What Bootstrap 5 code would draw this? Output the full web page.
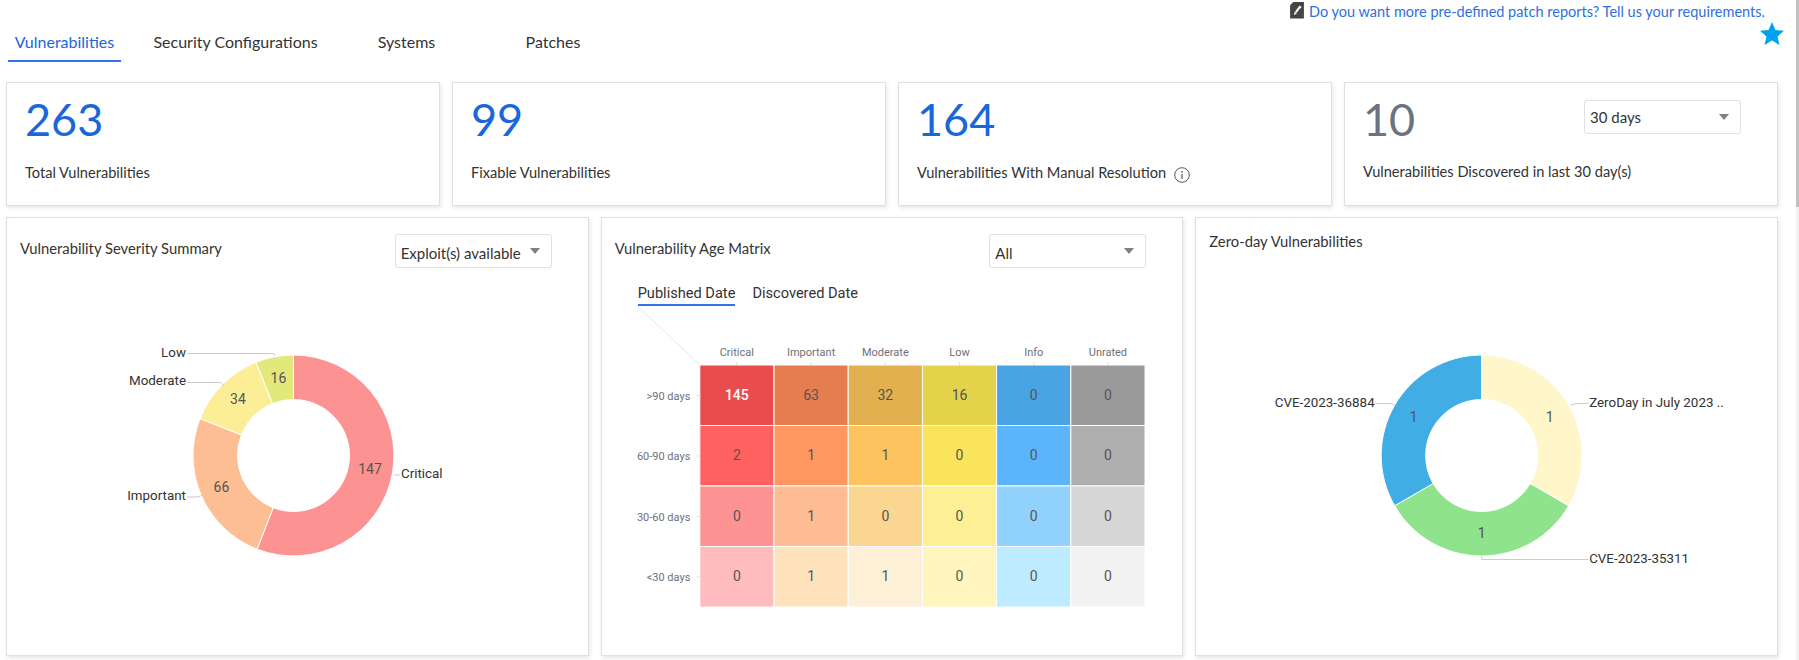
<!DOCTYPE html>
<html lang="en">
<head>
<meta charset="utf-8">
<title>Vulnerabilities</title>
<link href="https://cdn.jsdelivr.net/npm/bootstrap@5.3.0/dist/css/bootstrap.min.css" rel="stylesheet">
<style>
html,body{height:100%;overflow:hidden}
body{background:#fff;color:#333;font-family:Lato,"Liberation Sans",sans-serif;font-size:15px}
.shell{padding:0 21px 0 6px}
.top-head{height:82px}
.tab-strip{margin:26px 0 0 2px;flex-wrap:nowrap}
.tab-strip .nav-link{height:36px;padding:5px 0 7px;line-height:22px;font-size:16px;color:#333;text-align:center;border-bottom:2px solid transparent}
.tab-strip .nav-link.active{color:#1a66db;border-bottom-color:#2f74e8}
.w-a{width:113px}.w-b{width:229px}.w-c{width:113px}.w-d{width:180px}
.req-link{color:#2f6fdc;text-decoration:none;line-height:26px;margin:-1px 13px 0 0;font-size:14.5px}
.req-icon{margin-right:5px;vertical-align:-2px}
.star-mark{margin:-3px -6px 0 0;display:block}
.gut{--bs-gutter-x:12px;--bs-gutter-y:0}
.panel{border:1px solid #dfe0e6;border-radius:0;box-shadow:1px 2px 4px rgba(0,0,0,.1);background:#fff}
.stat-panel{height:124px;padding:10px 0 0 18px;margin-bottom:11px}
.stat-top{height:54px}
.stat-num{font-size:45px;line-height:50px;font-weight:400;color:#1a66db;margin-top:1px}
.stat-num.muted-num{color:#6c7380}
.stat-label{margin-top:15px;line-height:20px;font-size:14.6px;color:#333;display:flex;align-items:center}
.info-glyph{margin-left:8px;margin-top:3px}
.pick{height:34px;width:157px;padding:0 18px 0 5px;border:1px solid #dfe0e6;border-radius:3px;font-size:15px;line-height:32px;color:#333;font-family:Lato,"Liberation Sans",sans-serif;background-position:right 11px center;background-size:10px 6px;background-image:url("data:image/svg+xml,%3Csvg xmlns='http://www.w3.org/2000/svg' viewBox='0 0 10 6'%3E%3Cpath d='M0 0h10L5 6z' fill='%23808080'/%3E%3C/svg%3E")}
.stat-pick{margin:7px 36px 0 0}
.chart-panel{height:439px}
.chart-head{height:62px;padding:16px 36px 0 13px}
.chart-head .pick{padding-top:2px}
.chart-title{font-size:14.8px;line-height:22px;margin-top:3px;color:#333}
.chart-title.raised{margin-top:-4px}
.sub-tabs{height:26px;margin-left:36px;gap:17px;font-family:Roboto,"Liberation Sans",sans-serif;font-size:14.6px}
.sub-tabs .nav-link{padding:2px 0 0;line-height:22px;height:26px;color:#333;border-bottom:2px solid transparent}
.sub-tabs .nav-link.active{border-bottom-color:#2f74e8}
.chart-svg{display:block;width:100%}
.h374{height:374px}.h348{height:348px}
.chart-svg text{font-family:Roboto,"Liberation Sans",sans-serif}
.lbl{font-size:13.4px;fill:#333}
.val{font-size:14px;fill:#555;text-anchor:middle}
.val.strong{fill:#fff;font-weight:500}
.ax{font-size:11px;fill:#6e7079}
.leader{fill:none;stroke:#ccc;stroke-width:1}
.cells rect{stroke:#fff;stroke-width:1}
.sb-track{position:fixed;top:0;right:0;bottom:0;width:3px;background:#f1f1f1}
.sb-thumb{height:207px;background:#c1c1c1}
</style>
</head>
<body>
<div class="shell">
  <header class="top-head d-flex justify-content-between">
    <ul class="nav tab-strip">
      <li class="nav-item w-a"><a class="nav-link active" href="#">Vulnerabilities</a></li>
      <li class="nav-item w-b"><a class="nav-link" href="#">Security Configurations</a></li>
      <li class="nav-item w-c"><a class="nav-link" href="#">Systems</a></li>
      <li class="nav-item w-d"><a class="nav-link" href="#">Patches</a></li>
    </ul>
    <div class="d-flex flex-column align-items-end">
      <a class="req-link" href="#"><svg class="req-icon" width="14" height="17" viewBox="0 0 13 16"><path d="M3 0H13V15.500H0V3Z" fill="#444"/><path d="M3.500 12.500l.8-3.200L9 3.200l1.800 1.400L6.200 10.900z" fill="#fff"/><path d="M5 9.500l1.500 1L9.500 6" stroke="#444" stroke-width=".7" fill="none"/></svg>Do you want more pre-defined patch reports? Tell us your requirements.</a>
      <svg class="star-mark" width="24" height="23" viewBox="0 0 24 23"><path d="M12 0l3.400 8 8.600.8-6.500 5.700 2 8.500L12 18.500 4.500 23l2-8.500L0 8.800 8.600 8z" fill="#00a2ed"/></svg>
    </div>
  </header>

  <div class="row gut">
    <div class="col-3"><div class="panel stat-panel">
      <div class="stat-top"><div class="stat-num">263</div></div>
      <div class="stat-label">Total Vulnerabilities</div>
    </div></div>
    <div class="col-3"><div class="panel stat-panel">
      <div class="stat-top"><div class="stat-num">99</div></div>
      <div class="stat-label">Fixable Vulnerabilities</div>
    </div></div>
    <div class="col-3"><div class="panel stat-panel">
      <div class="stat-top"><div class="stat-num">164</div></div>
      <div class="stat-label">Vulnerabilities With Manual Resolution
        <svg class="info-glyph" width="16" height="16" viewBox="0 0 16 16"><circle cx="8" cy="8" r="7.300" fill="none" stroke="#555" stroke-width="1"/><circle cx="8" cy="4.800" r=".9" fill="#555"/><path d="M8 7v5" stroke="#555" stroke-width="1.200"/></svg>
      </div>
    </div></div>
    <div class="col-3"><div class="panel stat-panel">
      <div class="stat-top d-flex justify-content-between align-items-start">
        <div class="stat-num muted-num">10</div>
        <select class="form-select pick stat-pick" aria-label="Period"><option>30 days</option></select>
      </div>
      <div class="stat-label">Vulnerabilities Discovered in last 30 day(s)</div>
    </div></div>
  </div>

  <div class="row gut">
    <div class="col-4"><div class="panel chart-panel">
      <div class="chart-head d-flex justify-content-between align-items-start">
        <div class="chart-title">Vulnerability Severity Summary</div>
        <select class="form-select pick" aria-label="Filter"><option>Exploit(s) available</option></select>
      </div>
      <svg class="chart-svg h374" viewBox="7 280 580.67 374" preserveAspectRatio="none">
        <g stroke="#fff" stroke-width="1">
          <path fill="#fd9292" d="M293.500 355A100.500 100.500 0 1 1 257.130 549.190L273.230 507.700A56 56 0 1 0 293.500 399.500Z"/>
          <path fill="#fdbe94" d="M257.130 549.190A100.500 100.500 0 0 1 200.030 418.570L241.420 434.920A56 56 0 0 0 273.230 507.700Z"/>
          <path fill="#fcee96" d="M200.030 418.570A100.500 100.500 0 0 1 256.010 362.260L272.610 403.540A56 56 0 0 0 241.420 434.920Z"/>
          <path fill="#e3e87b" d="M256.010 362.260A100.500 100.500 0 0 1 293.500 355V399.500A56 56 0 0 0 272.610 403.540Z"/>
        </g>
        <path class="leader" d="M187 353.500H274L275 356M187 382.500H221L224 386M187 497H198L203 495M394 475H400"/>
        <text class="lbl" x="401" y="478.500">Critical</text>
        <text class="lbl" x="186" y="500.500" text-anchor="end">Important</text>
        <text class="lbl" x="186" y="385.500" text-anchor="end">Moderate</text>
        <text class="lbl" x="186" y="357.500" text-anchor="end">Low</text>
        <text class="val" x="370" y="474">147</text>
        <text class="val" x="221.500" y="492">66</text>
        <text class="val" x="238" y="404">34</text>
        <text class="val" x="278.500" y="383">16</text>
      </svg>
    </div></div>
    <div class="col-4"><div class="panel chart-panel">
      <div class="chart-head d-flex justify-content-between align-items-start">
        <div class="chart-title">Vulnerability Age Matrix</div>
        <select class="form-select pick" aria-label="Severity"><option>All</option></select>
      </div>
      <ul class="nav sub-tabs">
        <li class="nav-item"><a class="nav-link active" href="#">Published Date</a></li>
        <li class="nav-item"><a class="nav-link" href="#">Discovered Date</a></li>
      </ul>
      <svg class="chart-svg h348" viewBox="601.67 306 580.67 348" preserveAspectRatio="none">
        <path d="M638 307L699.500 365" stroke="#e6e6e6" fill="none"/>
        <g class="cells">
          <rect x="699.500" y="365" width="74.200" height="60.500" fill="#e84c4d"/><rect x="773.700" y="365" width="74.200" height="60.500" fill="#e67d4f"/><rect x="847.900" y="365" width="74.200" height="60.500" fill="#e3b04f"/><rect x="922.100" y="365" width="74.200" height="60.500" fill="#e3d24a"/><rect x="996.300" y="365" width="74.200" height="60.500" fill="#4aa3e3"/><rect x="1070.500" y="365" width="74.200" height="60.500" fill="#9a9a9a"/>
          <rect x="699.500" y="425.500" width="74.200" height="60.500" fill="#ff6060"/><rect x="773.700" y="425.500" width="74.200" height="60.500" fill="#ff9860"/><rect x="847.900" y="425.500" width="74.200" height="60.500" fill="#fcc35f"/><rect x="922.100" y="425.500" width="74.200" height="60.500" fill="#f9e45c"/><rect x="996.300" y="425.500" width="74.200" height="60.500" fill="#5cb5fa"/><rect x="1070.500" y="425.500" width="74.200" height="60.500" fill="#afafaf"/>
          <rect x="699.500" y="486" width="74.200" height="60.500" fill="#fd9393"/><rect x="773.700" y="486" width="74.200" height="60.500" fill="#fdbc94"/><rect x="847.900" y="486" width="74.200" height="60.500" fill="#fbd691"/><rect x="922.100" y="486" width="74.200" height="60.500" fill="#fcef94"/><rect x="996.300" y="486" width="74.200" height="60.500" fill="#91d1fd"/><rect x="1070.500" y="486" width="74.200" height="60.500" fill="#d6d6d6"/>
          <rect x="699.500" y="546.500" width="74.200" height="60.500" fill="#ffbcbe"/><rect x="773.700" y="546.500" width="74.200" height="60.500" fill="#fee2bc"/><rect x="847.900" y="546.500" width="74.200" height="60.500" fill="#fdf0d6"/><rect x="922.100" y="546.500" width="74.200" height="60.500" fill="#fff5bd"/><rect x="996.300" y="546.500" width="74.200" height="60.500" fill="#bdebff"/><rect x="1070.500" y="546.500" width="74.200" height="60.500" fill="#f2f2f2"/>
        </g>
        <path d="M736.500 362v3M810.800 362v3M885 362v3M959.200 362v3M1033.400 362v3M1107.600 362v3M696.500 395.500h3M696.500 456h3M696.500 516.500h3M696.500 577h3" stroke="#ddd" fill="none"/>
        <g text-anchor="middle">
          <text class="ax" x="736.500" y="356">Critical</text><text class="ax" x="810.800" y="356">Important</text><text class="ax" x="885" y="356">Moderate</text><text class="ax" x="959.200" y="356">Low</text><text class="ax" x="1033.400" y="356">Info</text><text class="ax" x="1107.600" y="356">Unrated</text>
        </g>
        <g text-anchor="end">
          <text class="ax" x="690" y="400">&gt;90 days</text><text class="ax" x="690" y="460">60-90 days</text><text class="ax" x="690" y="521">30-60 days</text><text class="ax" x="690" y="581">&lt;30 days</text>
        </g>
        <text class="val strong" x="736.500" y="400">145</text><text class="val" x="810.800" y="400">63</text><text class="val" x="885" y="400">32</text><text class="val" x="959.200" y="400">16</text><text class="val" x="1033.400" y="400">0</text><text class="val" x="1107.600" y="400">0</text>
        <text class="val" x="736.500" y="460">2</text><text class="val" x="810.800" y="460">1</text><text class="val" x="885" y="460">1</text><text class="val" x="959.200" y="460">0</text><text class="val" x="1033.400" y="460">0</text><text class="val" x="1107.600" y="460">0</text>
        <text class="val" x="736.500" y="521">0</text><text class="val" x="810.800" y="521">1</text><text class="val" x="885" y="521">0</text><text class="val" x="959.200" y="521">0</text><text class="val" x="1033.400" y="521">0</text><text class="val" x="1107.600" y="521">0</text>
        <text class="val" x="736.500" y="581">0</text><text class="val" x="810.800" y="581">1</text><text class="val" x="885" y="581">1</text><text class="val" x="959.200" y="581">0</text><text class="val" x="1033.400" y="581">0</text><text class="val" x="1107.600" y="581">0</text>
      </svg>
    </div></div>
    <div class="col-4"><div class="panel chart-panel">
      <div class="chart-head d-flex justify-content-between align-items-start">
        <div class="chart-title raised">Zero-day Vulnerabilities</div>
      </div>
      <svg class="chart-svg h374" viewBox="1196.330 280 580.67 374" preserveAspectRatio="none">
        <g stroke="#fff" stroke-width="1">
          <path fill="#fff6c9" d="M1482 355A100.500 100.500 0 0 1 1569.030 505.750L1530.500 483.500A56 56 0 0 0 1482 399.500Z"/>
          <path fill="#90e38d" d="M1569.030 505.750A100.500 100.500 0 0 1 1394.970 505.750L1433.500 483.500A56 56 0 0 0 1530.500 483.500Z"/>
          <path fill="#40aee5" d="M1394.970 505.750A100.500 100.500 0 0 1 1482 355V399.500A56 56 0 0 0 1433.500 483.500Z"/>
        </g>
        <path class="leader" d="M1571 405L1577 403.500H1589M1376 403.500H1392L1395 405M1482 556V559.500H1589"/>
        <text class="lbl" x="1375" y="407.500" text-anchor="end">CVE-2023-36884</text>
        <text class="lbl" x="1589.500" y="407.500">ZeroDay in July 2023 ..</text>
        <text class="lbl" x="1589.500" y="563.500">CVE-2023-35311</text>
        <text class="val" x="1550" y="422">1</text>
        <text class="val" x="1414" y="422">1</text>
        <text class="val" x="1482" y="538">1</text>
      </svg>
    </div></div>
  </div>
</div>
<div class="sb-track"><div class="sb-thumb"></div></div>
<script src="https://cdn.jsdelivr.net/npm/bootstrap@5.3.0/dist/js/bootstrap.bundle.min.js"></script>
</body>
</html>
